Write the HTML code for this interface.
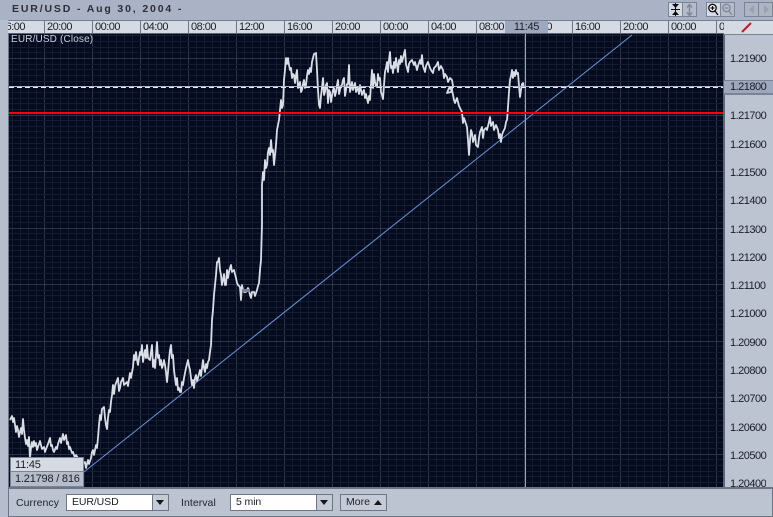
<!DOCTYPE html>
<html><head><meta charset="utf-8"><style>
html,body{margin:0;padding:0;width:773px;height:517px;overflow:hidden;background:#aab3c6}
*{box-sizing:border-box}
body{font-family:"Liberation Sans",sans-serif;color:#1a1d26;position:relative}
div,span{position:absolute}
.t{font-size:11px;line-height:12px;letter-spacing:-.2px;white-space:nowrap}
.x{top:0;height:12px;border-left:1px solid #6d7589;width:48px;padding:0}
.x b{font-weight:normal;position:absolute;left:2px;top:0;font-size:11px;line-height:12px;letter-spacing:-.5px}
.y{left:730px;font-size:11px;line-height:12px;letter-spacing:-.5px}
.l{font-size:10.5px;letter-spacing:.05px;line-height:12px;color:#20232c;white-space:nowrap}
.sel{top:494px;height:17px;background:#fff;border:1px solid #6d7589;font-size:10.5px;line-height:15px;padding-left:5px;letter-spacing:-.1px}
.ar{right:0;top:0;width:16px;height:15px;background:#c4cad6;border-left:1px solid #6d7589}
.ar i{position:absolute;left:3px;top:5px;width:0;height:0;border-left:4px solid transparent;border-right:4px solid transparent;border-top:5px solid #15171d}
</style></head><body>
<div style="left:0;top:20px;width:8px;height:497px;background:#b6bdcc"></div>
<div style="left:12px;top:3px;font-size:10.5px;font-weight:bold;line-height:13px;letter-spacing:1.85px;color:#2b2e38;white-space:nowrap">EUR/USD - Aug 30, 2004 -</div>

<svg style="position:absolute;left:662px;top:0" width="111" height="20">
<rect x="6.500" y="2.500" width="14" height="14" fill="#d7dbe4" stroke="#7b8396"/>
<rect x="20.500" y="2.500" width="14" height="14" fill="#b4bbca" stroke="#7b8396"/>
<path d="M10 4h7l-3.500 4zM10 15h7l-3.500-4z" fill="#0b0c10"/>
<path d="M9 9.500h9M13.500 3v13" stroke="#0b0c10" fill="none"/>
<path d="M27.500 5v10M25 7.500l2.500-3 2.500 3M25 12.500l2.500 3 2.500-3" stroke="#808797" stroke-width="1.400" fill="none"/>
<rect x="44.500" y="2.500" width="14" height="14" fill="#d7dbe4" stroke="#7b8396"/>
<rect x="58.500" y="2.500" width="14" height="14" fill="#b4bbca" stroke="#7b8396"/>
<circle cx="50.500" cy="8" r="3.700" fill="#fff" stroke="#0b0c10" stroke-width="1.300"/>
<path d="M48.500 8h4M50.500 6v4M53 11l3 4" stroke="#0b0c10" stroke-width="1.300" fill="none"/>
<circle cx="64.500" cy="8" r="3.700" fill="none" stroke="#808797" stroke-width="1.300"/>
<path d="M62.500 8h4M67 11l3 4" stroke="#808797" stroke-width="1.300" fill="none"/>
<rect x="82.500" y="2.500" width="14" height="14" fill="#adb5c5" stroke="#7b8396"/>
<rect x="96.500" y="2.500" width="14" height="14" fill="#adb5c5" stroke="#7b8396"/>
<path d="M92 5v9l-5-4.500zM102 5v9l5-4.500z" fill="#98a0b1"/>
</svg>

<div style="left:8px;top:20px;width:765px;height:1px;background:#757d91"></div>
<div style="left:8px;top:21px;width:716px;height:13px;background:#d6dae3;overflow:hidden;border-bottom:1px solid #5d6579">
<div class="x" style="left:-10px;border:0"><b>16:00</b></div>
<div class="x" style="left:36px"><b>20:00</b></div><div class="x" style="left:84px"><b>00:00</b></div>
<div class="x" style="left:132px"><b>04:00</b></div><div class="x" style="left:180px"><b>08:00</b></div>
<div class="x" style="left:228px"><b>12:00</b></div><div class="x" style="left:276px"><b>16:00</b></div>
<div class="x" style="left:324px"><b>20:00</b></div><div class="x" style="left:372px"><b>00:00</b></div>
<div class="x" style="left:420px"><b>04:00</b></div><div class="x" style="left:468px"><b>08:00</b></div>
<div class="x" style="left:516px"><b>12:00</b></div><div class="x" style="left:564px"><b>16:00</b></div>
<div class="x" style="left:612px"><b>20:00</b></div><div class="x" style="left:660px"><b>00:00</b></div>
<div class="x" style="left:708px"><b>04:00</b></div>
<div style="left:497px;top:0;width:43px;height:13px;background:#9da8bf;font-size:11px;line-height:12px;letter-spacing:-.3px;text-align:center">11:45</div>
</div>

<div style="left:724px;top:21px;width:49px;height:14px;background:#d6dae3;border-bottom:1px solid #7b8396"></div>
<svg style="position:absolute;left:724px;top:21px" width="49" height="14"><path d="M18 11l9-9" stroke="#b3222b" stroke-width="2"/></svg>

<div style="left:8px;top:34px;width:716px;height:453px;background-color:#050b1e;border-left:1px solid #6d7589;border-right:1px solid #5d6579"></div>
<div style="left:9px;top:34px;width:714px;height:453px;overflow:hidden;background-image:linear-gradient(to right,#2b344a 1px,transparent 1px),linear-gradient(to right,#141c30 1px,transparent 1px);background-size:48px 100%,8px 100%;background-position:35px 0,3px 0"></div>

<svg style="position:absolute;left:0;top:0" width="773" height="517" shape-rendering="auto">
<g shape-rendering="crispEdges">
<path fill="none" stroke="#141c30" d="M9 35.500H723M9 41.500H723M9 47.500H723M9 52.500H723M9 64.500H723M9 69.500H723M9 75.500H723M9 81.500H723M9 86.500H723M9 92.500H723M9 98.500H723M9 103.500H723M9 109.500H723M9 120.500H723M9 126.500H723M9 131.500H723M9 137.500H723M9 143.500H723M9 148.500H723M9 154.500H723M9 160.500H723M9 165.500H723M9 177.500H723M9 182.500H723M9 188.500H723M9 194.500H723M9 199.500H723M9 205.500H723M9 211.500H723M9 216.500H723M9 222.500H723M9 233.500H723M9 239.500H723M9 245.500H723M9 250.500H723M9 256.500H723M9 262.500H723M9 267.500H723M9 273.500H723M9 279.500H723M9 290.500H723M9 295.500H723M9 301.500H723M9 307.500H723M9 312.500H723M9 318.500H723M9 324.500H723M9 329.500H723M9 335.500H723M9 346.500H723M9 352.500H723M9 358.500H723M9 363.500H723M9 369.500H723M9 375.500H723M9 380.500H723M9 386.500H723M9 392.500H723M9 403.500H723M9 408.500H723M9 414.500H723M9 420.500H723M9 425.500H723M9 431.500H723M9 437.500H723M9 442.500H723M9 448.500H723M9 459.500H723M9 465.500H723M9 471.500H723M9 476.500H723M9 482.500H723"/>
<path fill="none" stroke="#2b344a" d="M9 58.500H723M9 115.500H723M9 171.500H723M9 228.500H723M9 284.500H723M9 341.500H723M9 397.500H723M9 454.500H723"/>
<path stroke="#9aa4b8" d="M525.500 34V487"/>
</g>
<path d="M84 472L632 35" stroke="#6d93dc" stroke-width="1" fill="none"/>
<g fill="none" stroke="#d9dde6" stroke-width="1.800" stroke-linejoin="round">
<polyline points="10,420 12,416 13,422 14,418 15,425 16,432 17,426 18,430 19,437 20,432 21,428 22,434 23,419 24,430 25,438 26,444 27,440 28,446 29,437 30,458 31,448 32,442 33,447 34,441 35,446 36,443 37,450 38,447 39,444 40,441 42,449 44,447 45,452 46,449 48,444 50,438 51,446 52,445 53,450 54,452 56,447 57,449 58,444 60,438 61,443 63,434 64,440 66,435 67,444 68,442 69,449 70,447 72,453 73,452 75,458 76,455 78,458 80,470 82,465 85,462 86,468 88,460 89,464 91,458 92,452 93,450 94,455 96,445 97,448 98,438 99,425 100,415 101,420 102,409 103,408 104,407 105,418 106,425 107,429 108,418 109,410 110,412 111,402 112,395 113,385 114,394 115,386 116,383 118,378 119,391 120,388 121,382 123,378 124,385 127,382 128,386 130,373 131,378 133,367 134,355 135,360 136,352 137,360 138,365 139,358 140,352 141,355 142,345 143,362 145,350 146,358 147,345 148,358 150,360 151,352 152,345 153,367 154,360 155,368 156,355 157,342 158,358 159,355 160,365 161,360 162,368 163,365 164,360 165,365 166,372 167,382 168,372 169,360 170,350 171,345 172,358 173,355 174,370 175,378 176,385 177,378 178,390 179,388 180,392 181,392 182,382 183,385 184,378 185,373 186,368 188,360 189,366 190,370 191,378 192,385 193,380 194,388 195,378 196,375 197,381 198,378 199,374 200,370 201,376 203,360 204,368 205,372 206,364 207,368 208,362 209,360 210,352 211,345 212,320 213,310 214,295 215,285 216,275 217,262 218,262 219,258 220,270 221,275 222,285 223,280 224,274 225,285 226,285 227,270 228,278 229,272 230,268 231,265 232,272 234,270 235,274 236,278 237,283 238,285 240,287 241,300 242,285 243,290 244,292 246,292 248,288 249,290 250,295 251,298 252,292 254,292 255,296 257,290 258,286 259,283 260,270 261,260 262,225 262,185 263,172 264,180 265,160 266,168 267,165 268,152 269,148 270,155 271,140 272,152 273,150 274,165 275,155 276,145 277,130 278,125 279,120 280,110 281,100 282,108 283,105 284,80 285,70 286,58 287,64 288,58 289,65 290,70 291,68 292,78 293,74 294,75 295,83 296,75 297,70 298,88 299,85 300,82 301,92 302,90 303,84 304,80 305,88 306,85 307,76 308,70 309,74 310,68 311,72 312,62 313,58 314,54 316,53 317,70 318,90 319,105 320,108 321,96 322,88 323,78 324,95 325,92 326,85 327,83 328,103 329,90 330,92 331,102 332,96 333,90 334,88 335,96 336,92 337,85 338,80 339,94 340,90 341,86 342,85 343,80 344,78 345,96 346,90 347,84 348,84 349,65 350,92 351,88 352,82 353,90 355,83 356,92 358,88 359,94 360,85 362,95 363,92 364,90 365,98 366,94 368,103 369,96 370,100 371,84 372,70 373,88 374,74 375,82 376,86 377,87 378,74 379,80 380,78 381,92 382,95 383,99 384,85 385,72 386,68 387,62 388,72 389,60 390,52 391,68 392,66 393,73 394,62 395,68 396,58 397,65 398,72 399,60 400,64 401,56 402,62 404,54 405,50 406,64 407,68 408,72 409,64 410,62 412,60 414,65 415,62 417,70 418,66 420,60 421,64 422,55 423,66 425,72 426,66 428,62 430,68 431,70 433,73 434,68 436,66 438,62 439,70 441,66 443,70 444,78 445,74 447,77 448,82 450,78 452,80 453,86 451,92 447,93 449,88 452,90 454,100 455,103 457,98 459,106 461,110 462,112 463,123 464,118 466,124 467,127 468,140 469,155 470,140 471,130 472,133 473,142 475,135 476,145 478,147 479,138 480,132 482,127 483,138 484,130 486,128 487,130 489,122 490,117 491,126 493,122 494,130 496,125 498,130 499,138 500,134 501,142 502,135 503,132 505,128 506,122 507,120 508,107 509,92 510,80 511,76 512,70 513,78 514,72 515,76 516,70 517,74 518,73 519,86 520,97 521,90 522,84 523,83 524,88"/>
</g>
<rect x="242" y="289" width="8" height="3" fill="#7b8396"/>
<path d="M9 86.500H723" stroke="#aab6cc" stroke-width="1" shape-rendering="crispEdges"/>
<path d="M9 87.500H723" stroke="#e6eaf2" stroke-width="1" stroke-dasharray="5 3" shape-rendering="crispEdges"/>
<path d="M9 113H723" stroke="#ff0000" stroke-width="2" shape-rendering="crispEdges"/>
</svg>

<div style="left:11px;top:34px;font-size:10px;line-height:12px;letter-spacing:.15px;color:#c8cfdc;white-space:nowrap">EUR/USD (Close)</div>

<div style="left:724px;top:35px;width:49px;height:452px;background:#bcc3d1;border-left:1px solid #5d6579"></div>
<div style="left:724px;top:80px;width:49px;height:15px;background:#9da8bf;border-top:1px solid #7b8396;border-bottom:2px solid #7b8396"></div>
<span class="y" style="top:53px">1.21900</span><span class="y" style="top:81px">1.21800</span>
<span class="y" style="top:110px">1.21700</span><span class="y" style="top:139px">1.21600</span>
<span class="y" style="top:167px">1.21500</span><span class="y" style="top:195px">1.21400</span>
<span class="y" style="top:224px">1.21300</span><span class="y" style="top:252px">1.21200</span>
<span class="y" style="top:280px">1.21100</span><span class="y" style="top:308px">1.21000</span>
<span class="y" style="top:337px">1.20900</span><span class="y" style="top:365px">1.20800</span>
<span class="y" style="top:393px">1.20700</span><span class="y" style="top:422px">1.20600</span>
<span class="y" style="top:450px">1.20500</span><span class="y" style="top:475px;height:12px;overflow:hidden;padding-top:3px">1.20400</span>

<div style="left:10px;top:457px;width:74px;height:30px;background:#b5bcca;border:1px solid #7b8396"></div>
<div style="left:11px;top:458px;width:72px;height:14px;background:#d6dae3;border-bottom:1px solid #7b8396"></div>
<span class="t" style="left:15px;top:459px">11:45</span>
<span class="t" style="left:15px;top:473px">1.21798 / 816</span>

<div style="left:8px;top:487px;width:765px;height:30px;background:#bcc3d1;border-top:2px solid #6d7589;border-bottom:1px solid #6d7589;border-left:1px solid #6d7589;border-right:1px solid #6d7589"></div>
<span class="l" style="left:16px;top:497px">Currency</span>
<div class="sel" style="left:66px;width:103px">EUR/USD<div class="ar"><i></i></div></div>
<span class="l" style="left:181px;top:497px">Interval</span>
<div class="sel" style="left:230px;width:103px">5 min<div class="ar"><i></i></div></div>
<div style="left:340px;top:494px;width:47px;height:17px;background:#c4cad6;border:1px solid #6d7589;font-size:10.5px;line-height:15px;padding-left:5px;color:#20232c">More<i style="position:absolute;left:33px;top:5px;width:0;height:0;border-left:4px solid transparent;border-right:4px solid transparent;border-bottom:5px solid #15171d"></i></div>
</body></html>
